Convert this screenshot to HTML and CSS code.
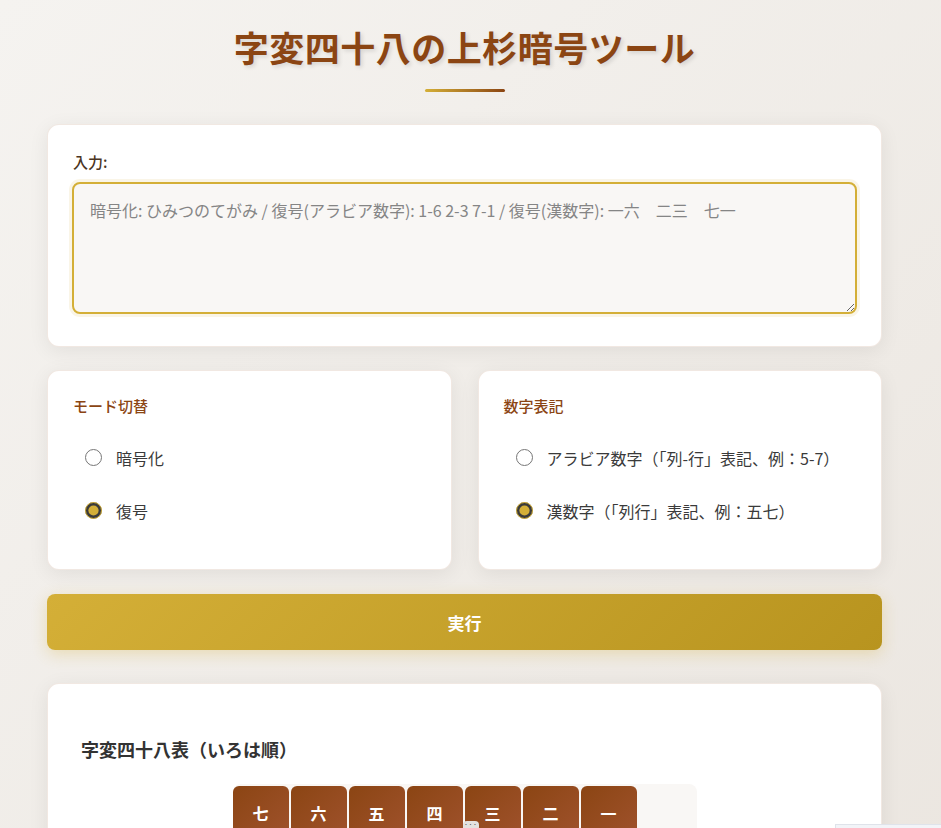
FILE: index.html
```html
<!DOCTYPE html>
<html lang="ja">
<head>
<meta charset="utf-8">
<title>字変四十八の上杉暗号ツール</title>
<link rel="stylesheet" href="styles.css">
</head>
<body>
<div class="page">
  <header class="header">
    <h1 class="title">字変四十八の上杉暗号ツール</h1>
    <div class="title-line"></div>
  </header>

  <section class="card input-card">
    <label class="field-label" for="input">入力:</label>
    <textarea id="input" class="input-area" autofocus placeholder="暗号化: ひみつのてがみ / 復号(アラビア数字): 1-6 2-3 7-1 / 復号(漢数字): 一六　二三　七一"></textarea>
  </section>

  <div class="options">
    <section class="card option-card">
      <h3 class="option-title">モード切替</h3>
      <label class="option"><input type="radio" name="mode" class="radio"><span>暗号化</span></label>
      <label class="option"><input type="radio" name="mode" class="radio" checked><span>復号</span></label>
    </section>
    <section class="card option-card">
      <h3 class="option-title">数字表記</h3>
      <label class="option"><input type="radio" name="num" class="radio"><span>アラビア数字（「列-行」表記、例：5-7）</span></label>
      <label class="option"><input type="radio" name="num" class="radio" checked><span>漢数字（「列行」表記、例：五七）</span></label>
    </section>
  </div>

  <button class="run-btn" type="button">実行</button>

  <section class="card table-card">
    <div class="table-inner">
      <h2 class="table-title">字変四十八表（いろは順）</h2>
      <div class="table-wrap">
        <table class="cipher-table">
          <thead>
            <tr>
              <th class="col-head">七</th>
              <th class="col-head">六</th>
              <th class="col-head">五</th>
              <th class="col-head">四</th>
              <th class="col-head">三</th>
              <th class="col-head">二</th>
              <th class="col-head">一</th>
              <th class="corner"></th>
            </tr>
          </thead>
        </table>
        <span class="dots-badge">···</span>
      </div>
    </div>
  </section>
</div>
<div class="corner-panel"></div>
</body>
</html>
```

FILE: styles.css
```css
* {
  box-sizing: border-box;
}

html, body {
  margin: 0;
  padding: 0;
}

body {
  min-height: 100vh;
  background: linear-gradient(135deg, #f5f3f0 0%, #ebe6e0 100%);
  font-family: "Noto Sans CJK JP", "Noto Sans", sans-serif;
  color: #333;
  overflow: hidden;
}

.page {
  width: 835px;
  margin-left: 47px;
  padding-top: 20px;
  padding-bottom: 40px;
}

.header {
  display: flex;
  flex-direction: column;
  align-items: center;
  margin-bottom: 32px;
}

.title {
  margin: 0;
  font-size: 35px;
  line-height: 54px;
  font-weight: 700;
  color: #8b4513;
  text-shadow: 2px 2px 4px rgba(0, 0, 0, 0.12);
  letter-spacing: 0.5px;
}

.title-line {
  width: 80px;
  height: 3px;
  margin-top: 15px;
  border-radius: 2px;
  background: linear-gradient(90deg, #d4af37, #8b4513);
}

.card {
  background: #fff;
  border: 1px solid rgba(139, 69, 19, 0.12);
  border-radius: 12px;
  box-shadow: 0 4px 20px rgba(0, 0, 0, 0.07);
  padding: 24px;
}

.input-card {
  padding-bottom: 32px;
}

.field-label {
  display: block;
  font-size: 15px;
  line-height: 22px;
  font-weight: 500;
  color: #4a3422;
  margin: 2px 0 9px 1px;
}

.input-area {
  display: block;
  width: 100%;
  height: 132px;
  padding: 14px 16px;
  border: 2px solid #d4af37;
  border-radius: 8px;
  background: #f9f7f5;
  font-family: "Noto Sans CJK JP", "Noto Sans", sans-serif;
  font-size: 16px;
  line-height: 24px;
  color: #333;
  box-shadow: 0 0 0 3px rgba(212, 175, 55, 0.12);
  outline: none;
  resize: vertical;
}

.input-area::placeholder {
  color: #858585;
}

.options {
  display: grid;
  grid-template-columns: 1fr 1fr;
  gap: 26px;
  margin-top: 23px;
}

.option-card {
  padding-bottom: 32px;
}

.option-title {
  margin: 0 0 14px 1px;
  font-size: 15px;
  line-height: 22px;
  font-weight: 500;
  color: #8b4513;
}

.option {
  display: flex;
  align-items: center;
  gap: 14px;
  height: 53px;
  padding-left: 13px;
  font-size: 16px;
  color: #3a3a3a;
  cursor: pointer;
}

.radio {
  width: 17px;
  height: 17px;
  margin: 0;
  accent-color: #d4af37;
}

.run-btn {
  display: block;
  width: 100%;
  height: 56px;
  margin-top: 24px;
  border: none;
  border-radius: 8px;
  background: linear-gradient(135deg, #d4af37 0%, #b8941f 100%);
  box-shadow: 0 4px 15px rgba(212, 175, 55, 0.3);
  color: #fff;
  font-family: "Noto Sans CJK JP", "Noto Sans", sans-serif;
  font-size: 17px;
  font-weight: 600;
  cursor: pointer;
}

.table-card {
  margin-top: 33px;
}

.table-inner {
  padding: 8px 9px;
}

.table-title {
  margin: 19px 0 21px 0;
  font-size: 18px;
  line-height: 28px;
  font-weight: 700;
  color: #333;
}

.table-wrap {
  position: relative;
  width: fit-content;
  margin: 0 auto;
  background: #f9f7f5;
  border-radius: 8px;
  padding: 2px 0 0 0;
}

.cipher-table {
  border-collapse: separate;
  border-spacing: 2px 0;
  margin-left: -2px;
}

.col-head {
  width: 56px;
  height: 56px;
  padding: 0 0 2px 0;
  border-radius: 6px 6px 0 0;
  background: linear-gradient(135deg, #8b4513, #a0522d);
  color: #fff;
  font-size: 16px;
  font-weight: 700;
  text-align: center;
}

.corner {
  width: 56px;
  background: transparent;
}

.dots-badge {
  position: absolute;
  left: 230px;
  top: 37px;
  width: 16px;
  height: 10px;
  border-radius: 4px;
  background: #e4e2e0;
  color: #555;
  font-size: 8px;
  line-height: 6px;
  text-align: center;
}

.corner-panel {
  position: fixed;
  left: 835px;
  top: 824px;
  width: 120px;
  height: 20px;
  background: #f2f4f8;
  border: 1px solid #dfe3ea;
}
```
